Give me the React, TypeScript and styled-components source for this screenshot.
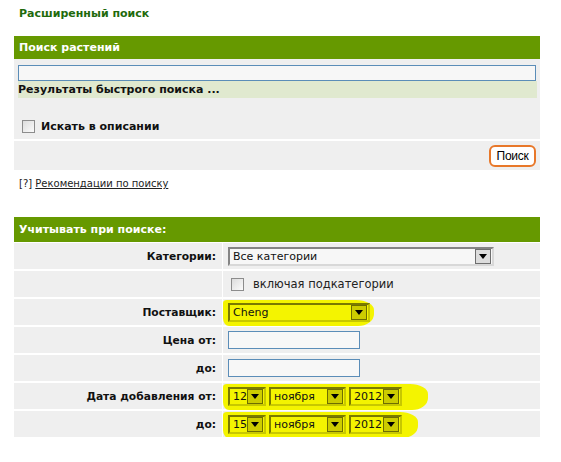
import React from 'react'
import styled, { createGlobalStyle } from 'styled-components'

const GlobalStyle = createGlobalStyle`
  body {
    margin: 0;
    background: #fff;
    font-family: 'DejaVu Sans', Verdana, sans-serif;
    color: #111;
  }
`

const Page = styled.div`
  width: 526px;
  padding: 6px 0 0 14px;
`

const Title = styled.h1`
  margin: 0 0 15px 5px;
  font-size: 11px;
  font-weight: bold;
  color: #1f6a0c;
  line-height: 15px;
`

const Panel = styled.section`
  background: #efefef;
`

const PanelHead = styled.div<{ h?: number }>`
  height: ${({ h = 23 }) => h}px;
  line-height: ${({ h = 23 }) => h}px;
  padding-left: 5px;
  background: #669900;
  color: #fff;
  font-size: 11px;
  font-weight: bold;
`

const SearchBody = styled.div`
  padding: 6px 4px 0 4px;
  height: 74px;
`

const TextInput = styled.input<{ w?: number }>`
  display: block;
  box-sizing: border-box;
  width: ${({ w }) => (w ? `${w}px` : '100%')};
  height: ${({ w }) => (w ? '18px' : '16px')};
  margin: 0;
  border: 1px solid #5b8db8;
  background: #f7f7f7;
  outline: none;
`

const QuickResults = styled.div`
  height: 17px;
  line-height: 17px;
  margin-right: -1px;
  background: #e0e9cf;
  font-size: 11px;
  font-weight: bold;
`

const CheckRow = styled.label`
  display: flex;
  align-items: center;
  gap: 6px;
  margin-top: 22px;
  padding-left: 4px;
  font-size: 11px;
  font-weight: bold;
`

const Box = styled.span`
  display: inline-block;
  box-sizing: border-box;
  width: 13px;
  height: 13px;
  border: 1px solid #8c8c8c;
  background: linear-gradient(135deg, #dcdcdc, #fbfbfb);
`

const ButtonRow = styled.div`
  display: flex;
  justify-content: flex-end;
  align-items: center;
  height: 29px;
  padding-right: 4px;
  border-top: 2px solid #fff;
`

const SearchButton = styled.button`
  box-sizing: border-box;
  width: 47px;
  height: 22px;
  padding: 0;
  border: 2px solid #e8782a;
  border-radius: 6px;
  background: #fff;
  font-family: 'Liberation Sans', Arial, sans-serif;
  font-size: 12px;
  color: #000;
  letter-spacing: -0.3px;
`

const Help = styled.div`
  margin: 8px 0 28px 5px;
  font-size: 10px;
  color: #222;
  a {
    color: #222;
    text-decoration: underline;
  }
`

const Grid = styled.div`
  display: grid;
  grid-template-columns: 208px 1fr;
  column-gap: 1px;
  row-gap: 2px;
  padding-top: 1px;
  background: #fff;
`

const Label = styled.div`
  display: flex;
  align-items: center;
  justify-content: flex-end;
  height: 26px;
  padding-right: 6px;
  background: #efefef;
  font-size: 10.7px;
  font-weight: bold;
`

const Value = styled.div`
  display: flex;
  align-items: center;
  gap: 3px;
  height: 26px;
  padding-left: 5px;
  background: #efefef;
  font-size: 12px;
`

// marker stroke drawn over a field by the editor
const Marker = styled.span<{ right: number }>`
  display: inline-flex;
  gap: 3px;
  padding: 3px ${({ right }) => right}px 4px 5px;
  margin: -3px 0 -4px -5px;
  background: #f4f400;
  border-radius: 4px 18px 16px 6px / 3px 10px 12px 8px;
`

const Select = styled.div<{ w: number; hl?: boolean }>`
  display: flex;
  align-items: center;
  box-sizing: border-box;
  width: ${({ w }) => w}px;
  height: 19px;
  padding: 1px;
  border: 2px solid ${({ hl }) => (hl ? '#7a7a00' : '#858585')};
  border-right-color: ${({ hl }) => (hl ? '#c8c800' : '#d8d8d8')};
  border-bottom-color: ${({ hl }) => (hl ? '#c8c800' : '#d8d8d8')};
  background: ${({ hl }) => (hl ? '#f4f400' : '#f7f7f7')};
  font-family: 'DejaVu Sans', Tahoma, sans-serif;
  font-size: 11px;
  color: #111;
`

const SelectText = styled.span`
  flex: 1;
  padding-left: 2px;
  line-height: 15px;
  white-space: nowrap;
  overflow: hidden;
`

const Arrow = styled.span<{ hl?: boolean }>`
  position: relative;
  flex: none;
  box-sizing: border-box;
  width: 16px;
  height: 15px;
  border: 1px solid ${({ hl }) => (hl ? '#6e6e00' : '#6e6e6e')};
  background: ${({ hl }) => (hl ? '#cccc00' : '#dcdcdc')};
  &::after {
    content: '';
    position: absolute;
    left: 3px;
    top: 4px;
    border-left: 4px solid transparent;
    border-right: 4px solid transparent;
    border-top: 5px solid #000;
  }
`

const SubCheck = styled.label`
  display: flex;
  align-items: center;
  gap: 9px;
  padding-left: 3px;
  font-size: 11.5px;
  color: #222;
`

type DropProps = { w: number; value: string; hl?: boolean }

const Drop = ({ w, value, hl }: DropProps) => (
  <Select w={w} hl={hl}>
    <SelectText>{value}</SelectText>
    <Arrow hl={hl} />
  </Select>
)

const DateRow = ({ day, right }: { day: string; right: number }) => (
  <Marker right={right}>
    <Drop w={38} value={day} hl />
    <Drop w={77} value="ноября" hl />
    <Drop w={53} value="2012" hl />
  </Marker>
)

export default function App() {
  return (
    <Page>
      <GlobalStyle />
      <Title>Расширенный поиск</Title>

      <Panel>
        <PanelHead>Поиск растений</PanelHead>
        <SearchBody>
          <TextInput type="text" />
          <QuickResults>Результаты быстрого поиска ...</QuickResults>
          <CheckRow>
            <Box />
            Искать в описании
          </CheckRow>
        </SearchBody>
        <ButtonRow>
          <SearchButton>Поиск</SearchButton>
        </ButtonRow>
      </Panel>

      <Help>
        [?] <a href="#">Рекомендации по поиску</a>
      </Help>

      <Panel>
        <PanelHead h={25}>Учитывать при поиске:</PanelHead>
        <Grid>
          <Label>Категории:</Label>
          <Value>
            <Drop w={266} value="Все категории" />
          </Value>

          <Label />
          <Value>
            <SubCheck>
              <Box />
              включая подкатегории
            </SubCheck>
          </Value>

          <Label>Поставщик:</Label>
          <Value>
            <Marker right={4}>
              <Drop w={142} value="Cheng" hl />
            </Marker>
          </Value>

          <Label>Цена от:</Label>
          <Value>
            <TextInput type="text" w={132} />
          </Value>

          <Label>до:</Label>
          <Value>
            <TextInput type="text" w={132} />
          </Value>

          <Label>Дата добавления от:</Label>
          <Value>
            <DateRow day="12" right={26} />
          </Value>

          <Label>до:</Label>
          <Value>
            <DateRow day="15" right={16} />
          </Value>
        </Grid>
      </Panel>
    </Page>
  )
}
